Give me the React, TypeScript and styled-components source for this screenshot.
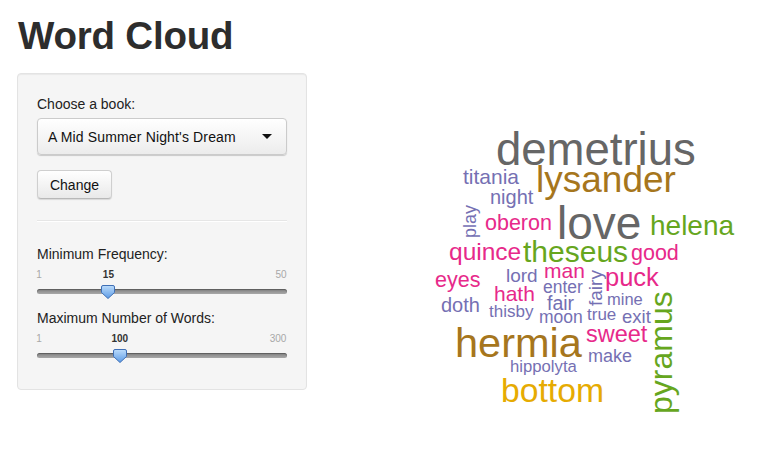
import React from "react";
import styled, { createGlobalStyle } from "styled-components";

const Global = createGlobalStyle`
  html, body { margin: 0; padding: 0; background: #fff; }
  body { font-family: "Liberation Sans", Arial, sans-serif; color: #333; }
`;

const Page = styled.div`
  padding: 0 17px;
  width: 769px;
  height: 450px;
  box-sizing: border-box;
  overflow: hidden;
`;

const Title = styled.h1`
  margin: 16px 0 17px 1px;
  font-size: 38.5px;
  line-height: 40px;
  font-weight: bold;
  color: #2d2d2d;
  letter-spacing: -0.2px;
`;

const Row = styled.div`
  display: flex;
  align-items: flex-start;
`;

const Well = styled.div`
  flex: 0 0 290px;
  width: 290px;
  box-sizing: border-box;
  padding: 20px 19px 19px;
  background: #f5f5f5;
  border: 1px solid #e3e3e3;
  border-radius: 4px;
  box-shadow: inset 0 1px 1px rgba(0, 0, 0, 0.05);
  display: flex;
  flex-direction: column;
`;

const Label = styled.label`
  font-size: 14px;
  line-height: 20px;
  color: #222;
`;

const Select = styled.div`
  margin-top: 4px;
  height: 37px;
  box-sizing: border-box;
  display: flex;
  align-items: center;
  justify-content: space-between;
  padding: 0 14px 0 10px;
  border: 1px solid #cbcbcb;
  border-radius: 4px;
  background: linear-gradient(#ffffff, #ececec);
  box-shadow: 0 1px 1px rgba(0, 0, 0, 0.18);
  font-size: 14px;
  letter-spacing: 0.15px;
  color: #111;
`;

const Arrow = styled.span`
  width: 0;
  height: 0;
  border-left: 5px solid transparent;
  border-right: 5px solid transparent;
  border-top: 5px solid #111;
`;

const Button = styled.button`
  margin-top: 15px;
  align-self: flex-start;
  width: 75px;
  height: 29px;
  font-family: "Liberation Sans", Arial, sans-serif;
  font-size: 14px;
  color: #111;
  border: 1px solid #cfcfcf;
  border-bottom-color: #b8b8b8;
  border-radius: 4px;
  background: linear-gradient(#ffffff, #e9e9e9);
  box-shadow: 0 1px 1px rgba(0, 0, 0, 0.12);
  padding: 0;
`;

const Rule = styled.hr`
  margin: 21px 0 22px;
  border: 0;
  border-top: 1px solid #e6e6e6;
  border-bottom: 1px solid #fff;
`;

const SliderBlock = styled.div<{ $last?: boolean }>`
  margin-top: 4px;
  margin-bottom: ${(p) => (p.$last ? "6px" : "8px")};
  display: flex;
  flex-direction: column;
`;

const Ticks = styled.div`
  position: relative;
  height: 14px;
  font-size: 10px;
  line-height: 14px;
`;

const Tick = styled.span<{ $bold?: boolean }>`
  position: absolute;
  top: 0;
  color: ${(p) => (p.$bold ? "#333" : "#a8a8a8")};
  font-weight: ${(p) => (p.$bold ? "bold" : "normal")};
  transform: translateX(-50%);
`;

const TrackArea = styled.div`
  position: relative;
  height: 18px;
  display: flex;
  align-items: center;
`;

const Track = styled.div`
  width: 100%;
  height: 5px;
  border-radius: 3px;
  background: linear-gradient(#808080, #a8a8a8);
  box-shadow: inset 0 1px 1px rgba(0, 0, 0, 0.3);
`;

const Thumb = styled.svg`
  position: absolute;
  top: 3px;
`;

const Main = styled.div`
  flex: 1;
  min-width: 0;
  padding: 37px 0 0 113px;
`;

function Slider({ min, max, value, last }: { min: number; max: number; value: number; last?: boolean }) {
  const pct = (value - min) / (max - min);
  const left = pct * 250;
  return (
    <SliderBlock $last={last}>
      <Ticks>
        <Tick style={{ left: 2 }}>{min}</Tick>
        <Tick $bold style={{ left: left }}>{value}</Tick>
        <Tick style={{ left: 250 - String(max).length * 3 }}>{max}</Tick>
      </Ticks>
      <TrackArea>
        <Track />
        <Thumb width="14" height="14" viewBox="0 0 14 14" style={{ left: left - 7 }}>
          <defs>
            <linearGradient id={`tg${value}`} x1="0" y1="0" x2="0" y2="1">
              <stop offset="0" stopColor="#bcdcfb" />
              <stop offset="1" stopColor="#5c9be6" />
            </linearGradient>
          </defs>
          <path
            d="M2 0.5 H12 Q13.5 0.5 13.5 2 V7.5 L7 13.5 L0.5 7.5 V2 Q0.5 0.5 2 0.5 Z"
            fill={`url(#tg${value})`}
            stroke="#3f6fb5"
            strokeWidth="1"
          />
        </Thumb>
      </TrackArea>
    </SliderBlock>
  );
}

type W = { t: string; x: number; y: number; s: number; c: string; r?: boolean };
const G = "#666666", B = "#A6761D", GR = "#66A61E", P = "#7570B3", M = "#E7298A", Y = "#E6AB02";
const OX = 420, OY = 110;
const words: W[] = [
  { t: "demetrius", x: 496, y: 165, s: 45.5, c: G },
  { t: "lysander", x: 536, y: 192, s: 37, c: B },
  { t: "love", x: 557, y: 239, s: 46, c: G },
  { t: "helena", x: 650, y: 235, s: 28, c: GR },
  { t: "titania", x: 463, y: 184, s: 21, c: P },
  { t: "night", x: 490, y: 204, s: 20, c: P },
  { t: "play", x: 476, y: 238, s: 18, c: P, r: true },
  { t: "oberon", x: 485, y: 230, s: 21.5, c: M },
  { t: "quince", x: 449, y: 260, s: 24.5, c: M },
  { t: "theseus", x: 523, y: 262, s: 30, c: GR },
  { t: "good", x: 631, y: 260, s: 21.5, c: M },
  { t: "eyes", x: 435, y: 287, s: 21.5, c: M },
  { t: "lord", x: 506, y: 282, s: 19, c: P },
  { t: "man", x: 544, y: 278, s: 21, c: M },
  { t: "fairy", x: 602, y: 306, s: 19, c: P, r: true },
  { t: "puck", x: 605, y: 286, s: 25.5, c: M },
  { t: "hath", x: 494, y: 301, s: 21, c: M },
  { t: "enter", x: 543, y: 293, s: 17.5, c: P },
  { t: "fair", x: 547, y: 310, s: 19.5, c: P },
  { t: "mine", x: 607, y: 305, s: 16.5, c: P },
  { t: "doth", x: 441, y: 312, s: 20, c: P },
  { t: "thisby", x: 489, y: 317, s: 17, c: P },
  { t: "moon", x: 539, y: 323, s: 17.5, c: P },
  { t: "true", x: 587, y: 320, s: 17, c: P },
  { t: "exit", x: 622, y: 323, s: 18.5, c: P },
  { t: "pyramus", x: 672, y: 414, s: 32, c: GR, r: true },
  { t: "sweet", x: 586, y: 342, s: 23.5, c: M },
  { t: "hermia", x: 455, y: 357, s: 41.5, c: B },
  { t: "make", x: 588, y: 362, s: 18, c: P },
  { t: "hippolyta", x: 510, y: 372, s: 16.7, c: P },
  { t: "bottom", x: 501, y: 402, s: 33.7, c: Y },
];

const Cloud = styled.svg`
  display: block;
  font-family: "Liberation Sans", Arial, sans-serif;
`;

export default function App() {
  return (
    <Page>
      <Global />
      <Title>Word Cloud</Title>
      <Row>
        <Well>
          <Label>Choose a book:</Label>
          <Select>
            <span>A Mid Summer Night's Dream</span>
            <Arrow />
          </Select>
          <Button>Change</Button>
          <Rule />
          <Label>Minimum Frequency:</Label>
          <Slider min={1} max={50} value={15} />
          <Label>Maximum Number of Words:</Label>
          <Slider min={1} max={300} value={100} last />
        </Well>
        <Main>
          <Cloud width="340" height="320" viewBox="0 0 340 320">
            {words.map((w) =>
              w.r ? (
                <text
                  key={w.t}
                  transform={`translate(${w.x - OX} ${w.y - OY}) rotate(-90)`}
                  fontSize={w.s}
                  fill={w.c}
                >
                  {w.t}
                </text>
              ) : (
                <text key={w.t} x={w.x - OX} y={w.y - OY} fontSize={w.s} fill={w.c}>
                  {w.t}
                </text>
              )
            )}
          </Cloud>
        </Main>
      </Row>
    </Page>
  );
}
